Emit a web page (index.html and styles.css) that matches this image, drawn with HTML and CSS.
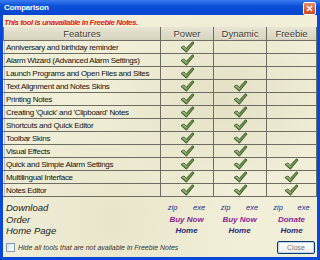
FILE: index.html
```html
<!DOCTYPE html>
<html lang="en">
<head>
    <meta charset="UTF-8">
    <title>Comparison</title>
    <link rel="stylesheet" href="styles.css">
</head>
<body>
<div class="window">
    <div class="titlebar">
        <span class="title">Comparison</span>
        <span class="closex">
            <svg width="13" height="13" viewBox="0 0 13 13">
                <path d="M3.5 3.5 L9.5 9.5 M9.5 3.5 L3.5 9.5" stroke="#fff" stroke-width="1.8"/>
            </svg>
        </span>
    </div>
    <div class="content">
        <p class="warn">This tool is unavailable in Freebie Notes.</p>
        <table class="cmp">
            <colgroup>
                <col class="feat"><col class="ed"><col class="ed"><col>
            </colgroup>
            <thead>
                <tr>
                    <th>Features</th>
                    <th>Power</th>
                    <th>Dynamic</th>
                    <th>Freebie</th>
                </tr>
            </thead>
            <tbody id="rows"></tbody>
        </table>
        <div class="links">
            <span class="lbl">Download</span>
            <span class="dl"><i>zip</i><i>exe</i></span>
            <span class="dl"><i>zip</i><i>exe</i></span>
            <span class="dl"><i>zip</i><i>exe</i></span>
            <span class="lbl">Order</span>
            <span class="buy">Buy Now</span>
            <span class="buy">Buy Now</span>
            <span class="buy">Donate</span>
            <span class="lbl">Home Page</span>
            <span class="home">Home</span>
            <span class="home">Home</span>
            <span class="home">Home</span>
        </div>
        <div class="bottom">
            <label class="hide"><span class="box"></span>Hide all tools that are not available in Freebie Notes</label>
            <span class="close">Close</span>
        </div>
    </div>
</div>
<script>
    var features = [
        ["Anniversary and birthday reminder", 1, 0, 0],
        ["Alarm Wizard (Advanced Alarm Settings)", 1, 0, 0],
        ["Launch Programs and Open Files and Sites", 1, 0, 0],
        ["Text Alignment and Notes Skins", 1, 1, 0],
        ["Printing Notes", 1, 1, 0],
        ["Creating 'Quick' and 'Clipboard' Notes", 1, 1, 0],
        ["Shortcuts and Quick Editor", 1, 1, 0],
        ["Toolbar Skins", 1, 1, 0],
        ["Visual Effects", 1, 1, 0],
        ["Quick and Simple Alarm Settings", 1, 1, 1],
        ["Multilingual Interface", 1, 1, 1],
        ["Notes Editor", 1, 1, 1]
    ];
    var check = '<svg width="15" height="12" viewBox="0 0 15 12"><path d="M1 6.5 L4 5 L6.2 7.6 L12.5 0.8 L14 2 L6.4 11.2 Z" fill="#6f9a4c" stroke="#2f4a22" stroke-width="0.9" stroke-linejoin="round"/><path d="M2.4 6.6 L4 6 L6.3 8.8" fill="none" stroke="#c9dfb0" stroke-width="0.7"/></svg>';
    var html = "";
    features.forEach(function (f) {
        html += "<tr><td>" + f[0] + "</td>";
        for (var i = 1; i < 4; i++) {
            html += "<td class='c'>" + (f[i] ? check : "") + "</td>";
        }
        html += "</tr>";
    });
    document.getElementById("rows").innerHTML = html;
</script>
</body>
</html>
```

FILE: styles.css
```css
body {
    margin: 0;
    font-family: "Liberation Sans", Arial, sans-serif;
}
.window {
    width: 320px;
    height: 260px;
    box-sizing: border-box;
    background: #0a47d6;
    display: flex;
    flex-direction: column;
    padding: 0 3px 3px 3px;
}
.titlebar {
    height: 15px;
    display: flex;
    align-items: center;
    justify-content: space-between;
    background: linear-gradient(#3b7cf0, #0a4fd9 40%, #0546d0);
    margin: 0 -3px;
    padding: 0 4px 0 4px;
}
.title {
    color: #fff;
    font-weight: bold;
    font-size: 8px;
    letter-spacing: -0.2px;
}
.closex {
    width: 13px;
    height: 13px;
    background: linear-gradient(#e88a6c, #d5431c);
    border: 1px solid #fff;
    border-radius: 2px;
    box-sizing: border-box;
    display: flex;
    align-items: center;
    justify-content: center;
    margin-top: 1px;
}
.closex svg {
    width: 11px;
    height: 11px;
}
.content {
    flex: 1;
    background:
        radial-gradient(ellipse at 70% 35%, rgba(200, 195, 160, 0.35), transparent 40%),
        radial-gradient(ellipse at 35% 85%, rgba(215, 210, 175, 0.35), transparent 45%),
        #f1efd8;
    display: flex;
    flex-direction: column;
}
.warn {
    margin: 0;
    padding: 3px 0 0 1px;
    height: 8px;
    color: #e0241b;
    font-size: 8px;
    font-style: italic;
    font-weight: bold;
    letter-spacing: -0.5px;
}
.cmp {
    margin-top: 1px;
    width: 314px;
    table-layout: fixed;
    border-collapse: collapse;
    font-size: 8px;
    letter-spacing: -0.3px;
    color: #111;
}
.cmp col.feat {
    width: 157px;
}
.cmp col.ed {
    width: 53px;
}
.cmp th {
    height: 13px;
    padding: 0;
    font-weight: normal;
    font-size: 9.5px;
    letter-spacing: 0;
    color: #3a3a30;
    text-shadow: 0 1px 1px #fff;
    background: linear-gradient(#e6e4d2, #d6d3bd);
    border: 1px solid #6c6c62;
    border-top: none;
}
.cmp td {
    height: 11.2px;
    padding: 0 0 0 2px;
    border: 1px solid #6c6c62;
    white-space: nowrap;
    overflow: hidden;
}
.cmp td:first-child {
    border-left: 1px solid #f8f8ff;
    box-shadow: inset 1px 0 0 #c0c0c8;
}
.cmp td.c {
    padding: 0;
    text-align: center;
    line-height: 0;
}
.cmp td.c svg {
    vertical-align: middle;
}
.links {
    display: grid;
    grid-template-columns: 157px 53px 53px 51px;
    grid-auto-rows: 11.5px;
    margin-top: 5px;
    align-items: center;
    font-style: italic;
}
.lbl {
    padding-left: 3px;
    font-size: 9.5px;
    color: #222;
}
.dl {
    display: flex;
    justify-content: space-around;
    font-size: 7.5px;
    color: #2b2b8a;
}
.buy, .home {
    text-align: center;
    font-size: 8px;
    font-weight: bold;
}
.buy {
    color: #8a1e96;
}
.home {
    color: #232c78;
}
.bottom {
    display: flex;
    align-items: center;
    justify-content: space-between;
    margin-top: 4px;
    padding: 0 2px 0 3px;
}
.hide {
    display: flex;
    align-items: center;
    gap: 3px;
    font-size: 7px;
    font-style: italic;
    color: #333;
}
.box {
    width: 9px;
    height: 9px;
    box-sizing: border-box;
    border: 1px solid #7f9db9;
    background: linear-gradient(135deg, #e0e0d8, #fff);
}
.close {
    width: 38px;
    height: 13px;
    box-sizing: border-box;
    border: 1px solid #003c74;
    border-radius: 2px;
    background: linear-gradient(#fff, #ecebe6);
    box-shadow: inset 0 0 0 1px #c5d5ef;
    color: #777;
    font-size: 7px;
    display: flex;
    align-items: center;
    justify-content: center;
}
```
